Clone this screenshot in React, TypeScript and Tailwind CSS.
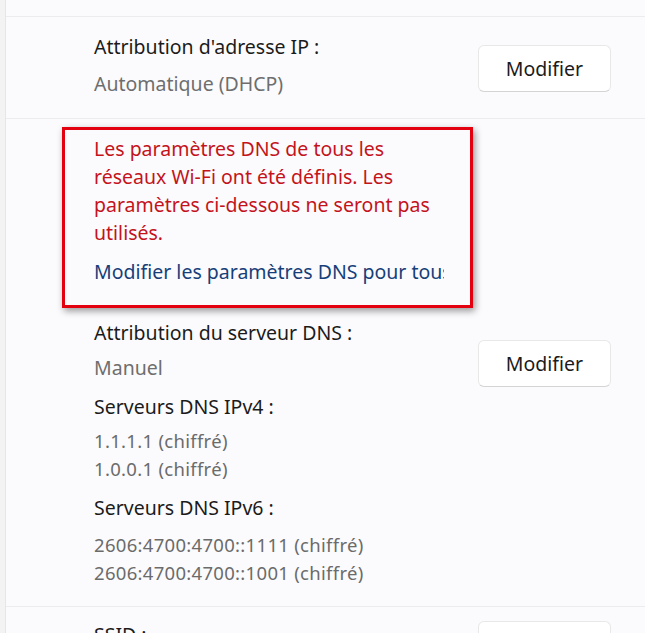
import React from "react";

const FONT = { fontFamily: '"Segoe UI", "Noto Sans", "Open Sans", sans-serif' };

const ModifierButton = ({ className = "" }: { className?: string }) => (
  <button
    className={`w-[133px] h-[47px] rounded-[6px] bg-white border border-[#e8e8e8] border-b-[#d4d4d4] text-[19.5px] text-[#1b1b1b] ${className}`}
  >
    Modifier
  </button>
);

const Label = ({ children }: { children: React.ReactNode }) => (
  <div className="text-[19.5px] leading-[28px] text-[#1b1b1b]">{children}</div>
);

const Value = ({ children }: { children: React.ReactNode }) => (
  <div className="text-[19.5px] leading-[28px] text-[#6e6e6e]">{children}</div>
);

const Small = ({ children }: { children: React.ReactNode }) => (
  <div className="text-[18.5px] leading-[28px] text-[#6b6b6b] tracking-[0.3px]">{children}</div>
);

export default function App() {
  return (
    <div style={FONT} className="w-[645px] h-[633px] overflow-hidden bg-[#f3f3f3] flex">
      {/* bande gauche */}
      <div className="w-[6px] shrink-0 border-r border-[#e6e6e8]" />

      <div className="flex-1 flex flex-col bg-[#fbfbfd]">
        {/* fin de la ligne précédente */}
        <div className="h-[17px] shrink-0 border-b border-[#ececef]" />

        {/* Adresse IP */}
        <div className="h-[102px] shrink-0 flex items-start justify-between pl-[88px] pr-[34px] pt-[16px] border-b border-[#ececef]">
          <div className="flex flex-col gap-[9px]">
            <Label>Attribution d'adresse IP :</Label>
            <Value>Automatique (DHCP)</Value>
          </div>
          <ModifierButton className="mt-[12px]" />
        </div>

        {/* DNS */}
        <div className="relative h-[488px] shrink-0 flex flex-col pl-[88px] pr-[34px] pt-[16px] border-b border-[#ececef]">
          <div className="w-[350px] overflow-hidden">
            <p className="text-[19.5px] leading-[28px] text-[#c4131b]">
              Les paramètres DNS de tous les
              <br />
              réseaux Wi-Fi ont été définis. Les
              <br />
              paramètres ci-dessous ne seront pas
              <br />
              utilisés.
            </p>
            <div className="mt-[11px] whitespace-nowrap text-[19.5px] leading-[28px] text-[#163f7a]">
              Modifier les paramètres DNS pour tous les réseaux Wi-Fi
            </div>
          </div>

          <div className="mt-[33px] flex items-start justify-between">
            <div className="flex flex-col">
              <Label>Attribution du serveur DNS :</Label>
              <div className="mt-[7px]">
                <Value>Manuel</Value>
              </div>
              <div className="mt-[11px]">
                <Label>Serveurs DNS IPv4 :</Label>
              </div>
              <div className="mt-[6px]">
                <Small>1.1.1.1 (chiffré)</Small>
                <Small>1.0.0.1 (chiffré)</Small>
              </div>
              <div className="mt-[11px]">
                <Label>Serveurs DNS IPv6 :</Label>
              </div>
              <div className="mt-[9px]">
                <Small>2606:4700:4700::1111 (chiffré)</Small>
                <Small>2606:4700:4700::1001 (chiffré)</Small>
              </div>
            </div>
            <ModifierButton className="mt-[21px]" />
          </div>

          {/* cadre d'annotation rouge */}
          <div className="absolute left-[56px] top-[8px] w-[411px] h-[181px] border-[3px] border-[#e3000f] shadow-[2px_3px_7px_rgba(0,0,0,0.4)] pointer-events-none" />
        </div>

        {/* SSID */}
        <div className="flex items-start justify-between pl-[88px] pr-[34px] pt-[14px]">
          <Label>SSID :</Label>
          <ModifierButton />
        </div>
      </div>
    </div>
  );
}
